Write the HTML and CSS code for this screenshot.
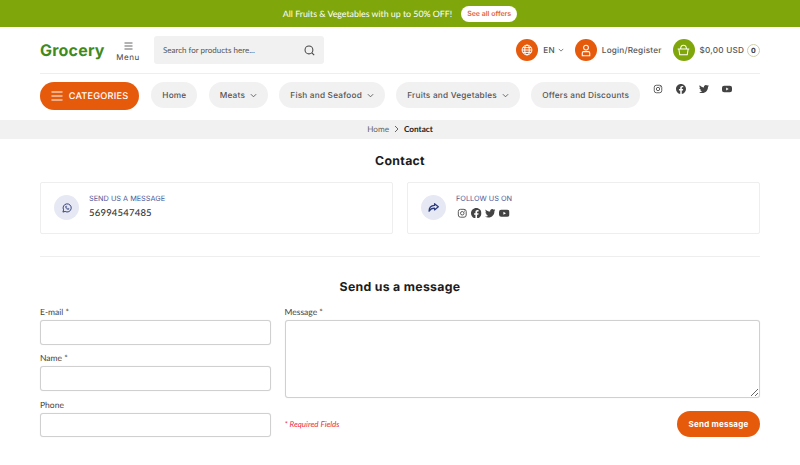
FILE: index.html
```html
<!DOCTYPE html>
<html lang="en">
<head>
    <meta charset="UTF-8">
    <meta name="viewport" content="width=device-width, initial-scale=1.0">
    <title>Contact</title>
    <link rel="stylesheet" href="styles.css">
</head>
<body>
    <svg class="sprite" width="0" height="0">
        <symbol id="i-instagram" viewBox="0 0 24 24"><rect x="3" y="3" width="18" height="18" rx="5" fill="none" stroke="currentColor" stroke-width="2"/><circle cx="12" cy="12" r="4" fill="none" stroke="currentColor" stroke-width="2"/><circle cx="17.2" cy="6.8" r="1.2" fill="currentColor"/></symbol>
        <symbol id="i-facebook" viewBox="0 0 24 24"><path fill="currentColor" d="M24 12.07C24 5.4 18.63 0 12 0S0 5.4 0 12.07c0 6.03 4.39 11.02 10.13 11.93v-8.44H7.08v-3.49h3.05V9.41c0-3.02 1.79-4.69 4.53-4.69 1.31 0 2.69.24 2.69.24v2.97h-1.51c-1.49 0-1.96.93-1.96 1.89v2.25h3.33l-.53 3.49h-2.8V24C19.61 23.09 24 18.1 24 12.07z"/></symbol>
        <symbol id="i-twitter" viewBox="0 0 24 24"><path fill="currentColor" d="M23.95 4.57a10 10 0 0 1-2.82.77 4.96 4.96 0 0 0 2.16-2.72c-.95.55-2 .95-3.12 1.18a4.92 4.92 0 0 0-8.38 4.48C7.69 8.1 4.07 6.13 1.64 3.16a4.82 4.82 0 0 0-.66 2.47c0 1.71.87 3.21 2.19 4.09a4.9 4.9 0 0 1-2.23-.61v.06a4.92 4.92 0 0 0 3.95 4.83 4.9 4.9 0 0 1-2.21.08 4.94 4.94 0 0 0 4.6 3.42A9.87 9.87 0 0 1 0 19.54a14 14 0 0 0 7.56 2.21c9.05 0 14-7.5 14-13.98 0-.21 0-.42-.02-.63a9.9 9.9 0 0 0 2.41-2.57z"/></symbol>
        <symbol id="i-youtube" viewBox="0 0 24 24"><path fill="currentColor" fill-rule="evenodd" d="M5 4h14a5 5 0 0 1 5 5v6a5 5 0 0 1-5 5H5a5 5 0 0 1-5-5V9a5 5 0 0 1 5-5zm5 4.500v7l6-3.500z"/></symbol>
    </svg>

    <div class="promo">
        <span>All Fruits &amp; Vegetables with up to 50% OFF!</span>
        <a class="promo-btn">See all offers</a>
    </div>

    <header class="wrap">
        <div class="top-row">
            <div class="logo">Grocery</div>
            <div class="menu-toggle">
                <svg width="9" height="8" viewBox="0 0 9 8"><path d="M0.500 1h8M0.500 4h8M0.500 7h8" stroke="#555" stroke-width="0.9" fill="none"/></svg>
                <span>Menu</span>
            </div>
            <div class="search">
                <span>Search for products here...</span>
                <svg width="11" height="11" viewBox="0 0 14 14" fill="none" stroke="#444" stroke-width="1.3"><circle cx="6.300" cy="6.300" r="5"/><path d="M10 10l3 3"/></svg>
            </div>
            <div class="top-actions">
                <div class="action">
                    <span class="round orange"><svg width="12" height="12" viewBox="0 0 16 16" fill="none" stroke="#fff" stroke-width="1.300"><circle cx="8" cy="8" r="6.500"/><ellipse cx="8" cy="8" rx="3" ry="6.500"/><path d="M1.500 8h13M2.500 4.800h11M2.500 11.200h11"/></svg></span>
                    <span>EN</span>
                    <svg class="chev" width="6" height="4" viewBox="0 0 8 5"><path d="M1 1l3 3 3-3" stroke="#555" fill="none"/></svg>
                </div>
                <div class="action">
                    <span class="round orange"><svg width="12" height="13" viewBox="0 0 16 17" fill="none" stroke="#fff" stroke-width="1.400"><circle cx="8" cy="4.600" r="3.200"/><path d="M4.600 10h6.800c1 0 1.600.8 1.600 1.700v3.800H3v-3.800c0-.9.6-1.700 1.600-1.700z"/></svg></span>
                    <span>Login/Register</span>
                </div>
                <div class="action">
                    <span class="round green"><svg width="13" height="12" viewBox="0 0 18 16" fill="none" stroke="#fff" stroke-width="1.400"><path d="M1 6.500h16M2.500 6.500l1.300 8h10.400l1.300-8M5 6.500C5 3 7 1.500 9 1.500s4 1.500 4 5"/></svg></span>
                    <span>$0,00 USD</span>
                    <span class="cart-count">0</span>
                </div>
            </div>
        </div>

        <nav class="nav-row">
            <a class="categories">
                <svg width="12" height="10" viewBox="0 0 12 10"><path d="M0.500 1h11M0.500 5h11M0.500 9h11" stroke="#fff" stroke-width="1.200" fill="none"/></svg>
                CATEGORIES
            </a>
            <a class="pill">Home</a>
            <a class="pill">Meats <svg width="7" height="5" viewBox="0 0 8 5"><path d="M1 1l3 3 3-3" stroke="#555" fill="none"/></svg></a>
            <a class="pill">Fish and Seafood <svg width="7" height="5" viewBox="0 0 8 5"><path d="M1 1l3 3 3-3" stroke="#555" fill="none"/></svg></a>
            <a class="pill">Fruits and Vegetables <svg width="7" height="5" viewBox="0 0 8 5"><path d="M1 1l3 3 3-3" stroke="#555" fill="none"/></svg></a>
            <a class="pill">Offers and Discounts</a>
            <div class="nav-social">
                <svg width="10" height="10"><use href="#i-instagram"/></svg>
                <svg width="10" height="10"><use href="#i-facebook"/></svg>
                <svg width="10" height="10"><use href="#i-twitter"/></svg>
                <svg width="10" height="10"><use href="#i-youtube"/></svg>
            </div>
        </nav>
    </header>

    <div class="breadcrumb">
        <span>Home</span>
        <svg width="5" height="8" viewBox="0 0 5 8"><path d="M1 1l3 3-3 3" stroke="#666" fill="none"/></svg>
        <b>Contact</b>
    </div>

    <main class="wrap">
        <h1 class="title">Contact</h1>
        <div class="info-cards">
            <div class="info-card">
                <span class="info-icon"><svg width="10" height="10" viewBox="0 0 16 16" fill="none" stroke="#2b3a7c" stroke-width="1.500"><path d="M1.500 14.500l1-3.600A6.500 6.500 0 1 1 5 13.500z"/><path d="M5.500 5.500c0 2.800 2.200 5 5 5l.8-1.400-1.800-.9-.8.7c-.8-.4-1.200-.9-1.600-1.600l.7-.8-.9-1.800z" stroke-width="1"/></svg></span>
                <div class="info-text">
                    <div class="info-label">SEND US A MESSAGE</div>
                    <div class="info-value">56994547485</div>
                </div>
            </div>
            <div class="info-card">
                <span class="info-icon"><svg width="11" height="9" viewBox="0 0 16 13" fill="none" stroke="#2b3a7c" stroke-width="1.800" stroke-linejoin="round"><path d="M9.500 1L15 5.500 9.500 10V7.500C6 7.500 3.500 8.500 1.500 12 1.500 7 4.500 3.800 9.500 3.500z"/></svg></span>
                <div class="info-text">
                    <div class="info-label">FOLLOW US ON</div>
                    <div class="info-social">
                        <svg width="10.500" height="10.500"><use href="#i-instagram"/></svg>
                        <svg width="10.500" height="10.500"><use href="#i-facebook"/></svg>
                        <svg width="10.500" height="10.500"><use href="#i-twitter"/></svg>
                        <svg width="10.500" height="10.500"><use href="#i-youtube"/></svg>
                    </div>
                </div>
            </div>
        </div>
        <hr class="divider">
        <h2 class="title form-title">Send us a message</h2>
        <form class="contact-form">
            <div class="form-col left">
                <label>E-mail *<input type="text"></label>
                <label>Name *<input type="text"></label>
                <label>Phone<input type="text"></label>
            </div>
            <div class="form-col right">
                <label>Message *<textarea></textarea></label>
                <div class="form-foot">
                    <span class="required">* Required Fields</span>
                    <button type="button">Send message</button>
                </div>
            </div>
        </form>
    </main>
</body>
</html>
```

FILE: styles.css
```css
* {
    box-sizing: border-box;
}
body {
    margin: 0;
    font-family: "Lato", sans-serif;
    color: #333;
    background: #fff;
    text-rendering: geometricPrecision;
}
.sprite {
    position: absolute;
}
.wrap {
    width: 720px;
    margin: 0 auto;
}
.promo {
    height: 27px;
    background: #7fa70b;
    color: #fff;
    font-size: 8.800px;
    display: flex;
    align-items: center;
    justify-content: center;
    gap: 9px;
}
.promo-btn {
    background: #fff;
    color: #e2603a;
    font-family: "Inter", sans-serif;
    font-size: 7px;
    font-weight: 600;
    width: 56px;
    text-align: center;
    height: 16px;
    line-height: 16px;
    border-radius: 8px;
}
.top-row {
    height: 47px;
    display: flex;
    align-items: center;
    border-bottom: 1px solid #eee;
}
.logo {
    width: 70px;
    font-family: "Inter", sans-serif;
    font-weight: 700;
    font-size: 16px;
    letter-spacing: 0.2px;
    color: #3f8a1e;
}
.menu-toggle {
    width: 24px;
    margin-left: 6px;
    padding-top: 3px;
    display: flex;
    flex-direction: column;
    align-items: center;
    font-family: "Inter", sans-serif;
    font-size: 8px;
    letter-spacing: 0.5px;
    line-height: 10px;
    gap: 2px;
    color: #444;
}
.search {
    width: 170px;
    height: 28px;
    margin-left: 14px;
    padding: 0 9px 0 9px;
    background: #f1f1f1;
    border-radius: 3px;
    display: flex;
    align-items: center;
    justify-content: space-between;
    font-size: 8px;
    color: #555;
}
.top-actions {
    margin-left: auto;
    display: flex;
    align-items: center;
    gap: 11px;
    font-family: "Inter", sans-serif;
    font-size: 8.200px;
    font-weight: 500;
    letter-spacing: 0.2px;
    color: #555;
}
.action {
    display: flex;
    align-items: center;
    gap: 5px;
}
.round {
    width: 22px;
    height: 22px;
    border-radius: 50%;
    display: flex;
    align-items: center;
    justify-content: center;
}
.orange {
    background: #e65a0c;
}
.green {
    background: #7fa70b;
}
.action .chev {
    margin-left: -2px;
}
.action .cart-count {
    width: 13px;
    height: 13px;
    margin-left: -2px;
    border: 1px solid #cfcfa8;
    border-radius: 50%;
    font-size: 7px;
    font-weight: 700;
    color: #333;
    display: flex;
    align-items: center;
    justify-content: center;
}
.nav-row {
    height: 46px;
    padding-top: 8px;
    display: flex;
    align-items: flex-start;
    gap: 11.300px;
    font-family: "Inter", sans-serif;
    font-size: 8.250px;
    font-weight: 500;
    letter-spacing: 0.2px;
    color: #555;
}
.categories {
    width: 99px;
    height: 28px;
    background: #e65a0c;
    color: #fff;
    border-radius: 14px;
    font-size: 9.200px;
    display: flex;
    align-items: center;
    justify-content: center;
    gap: 6px;
    margin-right: 1px;
}
.pill {
    height: 26px;
    padding: 0 11px;
    background: #f1f1f1;
    border-radius: 13px;
    display: flex;
    align-items: center;
    gap: 5px;
}
.nav-social {
    display: flex;
    gap: 13px;
    margin: 2px 0 0 2px;
    color: #444;
}
.breadcrumb {
    height: 18.500px;
    background: #f1f1f1;
    display: flex;
    align-items: center;
    justify-content: center;
    gap: 5px;
    font-size: 8.200px;
    color: #666;
}
.breadcrumb b {
    color: #222;
    font-weight: 700;
}
.title {
    margin: 0;
    text-align: center;
    font-family: "Inter", sans-serif;
    font-weight: 700;
    font-size: 12.300px;
    letter-spacing: 0.3px;
    line-height: 15px;
    color: #1c1c1c;
}
main > .title:first-child {
    padding-top: 14px;
}
.info-cards {
    display: flex;
    gap: 14px;
    margin-top: 14px;
}
.info-card {
    flex: 1;
    height: 52px;
    border: 1px solid #eee;
    border-radius: 2px;
    display: flex;
    align-items: center;
    gap: 10px;
    padding-left: 13px;
}
.info-text {
    margin-bottom: 2px;
}
.info-icon {
    width: 25px;
    height: 25px;
    background: #e6e9f3;
    border-radius: 50%;
    display: flex;
    align-items: center;
    justify-content: center;
}
.info-label {
    font-family: "Inter", sans-serif;
    font-size: 7.300px;
    color: #4a5a9a;
    line-height: 9px;
}
.info-value {
    margin-top: 5px;
    font-size: 9.500px;
    letter-spacing: 0.2px;
    line-height: 12px;
    font-weight: 500;
}
.info-social {
    margin-top: 5px;
    display: flex;
    gap: 3.500px;
    color: #444;
    padding-left: 1px;
    height: 12px;
}
.divider {
    margin: 22px 0 0;
    border: 0;
    border-top: 1px solid #eee;
}
.form-title {
    margin-top: 22.500px;
}
.contact-form {
    display: flex;
    gap: 13.500px;
    margin-top: 12px;
}
.form-col label {
    display: block;
    font-size: 8.500px;
    line-height: 12px;
    color: #444;
    margin-bottom: 7.800px;
}
.form-col.left {
    width: 231px;
}
.form-col.right {
    flex: 1;
}
.form-col input,
.form-col textarea {
    display: block;
    width: 100%;
    margin-top: 2px;
    border: 1px solid #d0d0d0;
    border-radius: 3px;
    box-shadow: 0 0 1px rgba(0, 0, 0, 0.15);
    background: #fff;
}
.form-col input {
    height: 24.500px;
}
.form-col textarea {
    height: 77.500px;
    resize: vertical;
}
.form-foot {
    display: flex;
    align-items: center;
    justify-content: space-between;
    margin-top: 13.700px;
}
.required {
    font-style: italic;
    font-size: 8px;
    color: #e8304f;
}
.form-foot button {
    width: 83px;
    height: 26px;
    border: 0;
    border-radius: 13px;
    background: #e65a0c;
    color: #fff;
    font-family: "Inter", sans-serif;
    font-size: 8px;
    font-weight: 700;
    letter-spacing: 0.2px;
}
```
